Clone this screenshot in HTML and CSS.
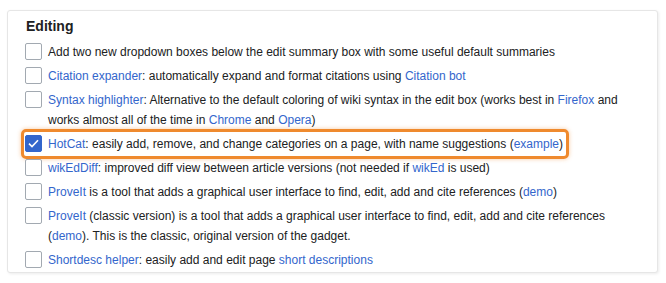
FILE: index.html
```html
<!DOCTYPE html>
<html lang="en">
<head>
  <meta charset="UTF-8" />
  <title>Gadgets - Editing</title>
  <link rel="stylesheet" href="styles.css">
</head>
<body>
  <div class="card">
    <h2>Editing</h2>
    <ul class="gadgets">
      <li class="gadget">
        <span class="box"></span>
        <span class="label">Add two new dropdown boxes below the edit summary box with some useful default summaries</span>
      </li>
      <li class="gadget">
        <span class="box"></span>
        <span class="label"><a href="#">Citation expander</a>: automatically expand and format citations using <a href="#">Citation bot</a></span>
      </li>
      <li class="gadget">
        <span class="box"></span>
        <span class="label"><a href="#">Syntax highlighter</a>: Alternative to the default coloring of wiki syntax in the edit box (works best in <a href="#">Firefox</a> and works almost all of the time in <a href="#">Chrome</a> and <a href="#">Opera</a>)</span>
      </li>
      <li class="gadget highlight">
        <span class="box checked">
          <svg width="11" height="9" viewBox="0 0 11 9"><path d="M1 4.6 L4 7.5 L10 1.2" fill="none" stroke="#fff" stroke-width="1.6"/></svg>
        </span>
        <span class="label"><a href="#">HotCat</a>: easily add, remove, and change categories on a page, with name suggestions (<a href="#">example</a>)</span>
      </li>
      <li class="gadget">
        <span class="box"></span>
        <span class="label"><a href="#">wikEdDiff</a>: improved diff view between article versions (not needed if <a href="#">wikEd</a> is used)</span>
      </li>
      <li class="gadget">
        <span class="box"></span>
        <span class="label"><a href="#">ProveIt</a> is a tool that adds a graphical user interface to find, edit, add and cite references (<a href="#">demo</a>)</span>
      </li>
      <li class="gadget">
        <span class="box"></span>
        <span class="label"><a href="#">ProveIt</a> (classic version) is a tool that adds a graphical user interface to find, edit, add and cite references (<a href="#">demo</a>). This is the classic, original version of the gadget.</span>
      </li>
      <li class="gadget">
        <span class="box"></span>
        <span class="label"><a href="#">Shortdesc helper</a>: easily add and edit page <a href="#">short descriptions</a></span>
      </li>
    </ul>
  </div>
</body>
</html>
```

FILE: styles.css
```css
body {
  margin: 0;
  background: #fff;
  font-family: "Liberation Sans", Arial, sans-serif;
  color: #202122;
}
.card {
  margin: 10px 8px 10px 7px;
  padding: 4px 26px 0 17px;
  background: #fff;
  border: 1px solid #e6e6e6;
  border-radius: 3px;
  box-shadow: 1px 1px 3px rgba(0, 0, 0, 0.08);
}
h2 {
  margin: 0 0 3px 1px;
  font-size: 14px;
  font-weight: bold;
  line-height: 22px;
}
.gadgets {
  list-style: none;
  margin: 0;
  padding: 0;
}
.gadget {
  display: flex;
  align-items: flex-start;
  padding: 2px 0;
  font-size: 12px;
  line-height: 20px;
}
.box {
  flex: none;
  width: 15px;
  height: 15px;
  margin: 1px 6px 0 0;
  border: 1px solid #a2a9b1;
  border-radius: 2px;
  background: #fff;
  display: flex;
  align-items: center;
  justify-content: center;
}
.box.checked {
  background: #3366cc;
  border-color: #3366cc;
}
.highlight {
  width: fit-content;
  margin: -3px 0 -3px -4px;
  padding: 2px 3px 2px 1px;
  border: 3px solid #ef8a2e;
  border-radius: 5px;
  box-shadow: 0 0 4px rgba(239, 138, 46, 0.45);
}
a {
  color: #3366cc;
  text-decoration: none;
}
```
